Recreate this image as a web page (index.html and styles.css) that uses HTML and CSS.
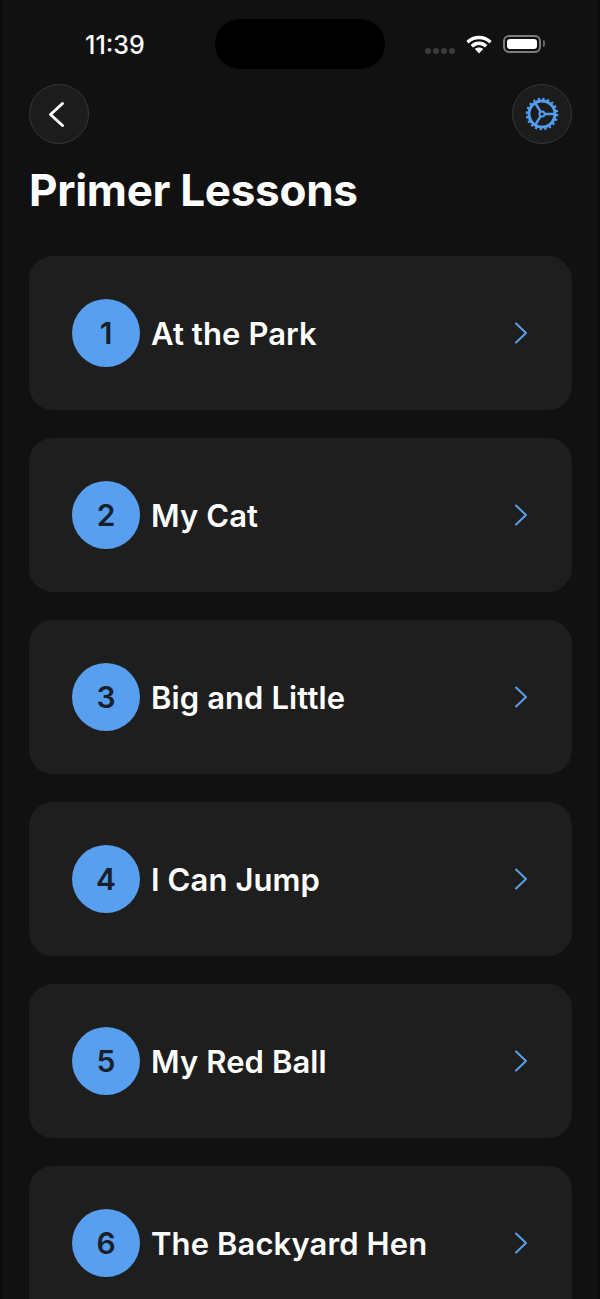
FILE: index.html
```html
<!DOCTYPE html>
<html lang="en">
<head>
<meta charset="utf-8">
<title>Primer Lessons</title>
<link rel="stylesheet" href="styles.css">
</head>
<body>
<div class="screen">
  <header class="status">
    <span class="time">11:39</span>
    <span class="island"></span>
    <div class="indicators">
      <span class="signal"><i></i><i></i><i></i><i></i></span>
      <svg class="wifi" width="28" height="20" viewBox="0 0 28 20"><path d="M2.500 8.200C9 2 19 2 25.500 8.200M6.800 12.300C11 8.300 17 8.300 21.200 12.300" fill="none" stroke="#fff" stroke-width="3.400"/><path d="M14 19.500l-4.200-4.400c2.400-2 6-2 8.400 0z" fill="#fff"/></svg>
      <span class="battery"><span class="battery-fill"></span></span>
    </div>
  </header>
  <nav class="toolbar">
    <button class="round-btn" aria-label="Back">
      <svg width="24" height="32" viewBox="0 0 24 32"><path d="M15.500 5.500L3.500 16.500L15.500 27.500" fill="none" stroke="#fff" stroke-width="3" stroke-linecap="round" stroke-linejoin="round"/></svg>
    </button>
    <button class="round-btn" aria-label="Settings">
      <svg width="36" height="36" viewBox="0 0 36 36">
        <circle cx="18" cy="18" r="13" fill="none" stroke="#549df0" stroke-width="3"/>
        <circle cx="18" cy="18" r="15" fill="none" stroke="#549df0" stroke-width="2.600" stroke-dasharray="2.200 2.512"/>
        <circle cx="18" cy="18" r="2.600" fill="none" stroke="#549df0" stroke-width="2"/>
        <path d="M20.500 18H30M16.700 15.800L11.500 7.500M16.700 20.200L11.500 28.500" fill="none" stroke="#549df0" stroke-width="2.400"/>
      </svg>
    </button>
  </nav>
  <h1 class="page-title">Primer Lessons</h1>
  <main class="lessons">
    <a class="lesson"><span class="num">1</span><span class="name">At the Park</span><svg class="chev" width="16" height="24" viewBox="0 0 16 24"><path d="M3 2.500L13 12L3 21.500" fill="none" stroke="#5a9fe8" stroke-width="2" stroke-linecap="round" stroke-linejoin="round"/></svg></a>
    <a class="lesson"><span class="num">2</span><span class="name">My Cat</span><svg class="chev" width="16" height="24" viewBox="0 0 16 24"><path d="M3 2.500L13 12L3 21.500" fill="none" stroke="#5a9fe8" stroke-width="2" stroke-linecap="round" stroke-linejoin="round"/></svg></a>
    <a class="lesson"><span class="num">3</span><span class="name">Big and Little</span><svg class="chev" width="16" height="24" viewBox="0 0 16 24"><path d="M3 2.500L13 12L3 21.500" fill="none" stroke="#5a9fe8" stroke-width="2" stroke-linecap="round" stroke-linejoin="round"/></svg></a>
    <a class="lesson"><span class="num">4</span><span class="name">I Can Jump</span><svg class="chev" width="16" height="24" viewBox="0 0 16 24"><path d="M3 2.500L13 12L3 21.500" fill="none" stroke="#5a9fe8" stroke-width="2" stroke-linecap="round" stroke-linejoin="round"/></svg></a>
    <a class="lesson"><span class="num">5</span><span class="name">My Red Ball</span><svg class="chev" width="16" height="24" viewBox="0 0 16 24"><path d="M3 2.500L13 12L3 21.500" fill="none" stroke="#5a9fe8" stroke-width="2" stroke-linecap="round" stroke-linejoin="round"/></svg></a>
    <a class="lesson"><span class="num">6</span><span class="name">The Backyard Hen</span><svg class="chev" width="16" height="24" viewBox="0 0 16 24"><path d="M3 2.500L13 12L3 21.500" fill="none" stroke="#5a9fe8" stroke-width="2" stroke-linecap="round" stroke-linejoin="round"/></svg></a>
  </main>
</div>
</body>
</html>
```
FILE: styles.css
```css
* { box-sizing: border-box; }

html, body {
  margin: 0;
  height: 100%;
  background: #0a0a0a;
  overflow: hidden;
}

.screen {
  width: 596px;
  height: 1299px;
  margin-left: 2px;
  margin-right: 2px;
  background: #111111;
  overflow: hidden;
  font-family: Inter, "Liberation Sans", sans-serif;
  color: #fff;
}

.status {
  height: 84px;
  padding: 19px 27px 0 83px;
  display: flex;
  align-items: flex-start;
}

.time {
  width: 130px;
  margin-top: 12px;
  font-size: 25px;
  line-height: 28px;
  font-weight: 500;
}

.island {
  width: 170px;
  height: 50px;
  border-radius: 25px;
  background: #000;
}

.indicators {
  margin-left: 40px;
  margin-top: 14px;
  display: flex;
  align-items: center;
  gap: 10px;
}

.signal {
  display: flex;
  gap: 2px;
  margin-top: 15px;
}

.signal i {
  width: 6px;
  height: 6px;
  border-radius: 50%;
  background: #3c3c3c;
}

.battery {
  position: relative;
  width: 38px;
  height: 18px;
  padding: 2px;
  border: 2px solid #7c7c7c;
  border-radius: 6px;
}

.battery::after {
  content: "";
  position: absolute;
  right: -6px;
  top: 3px;
  width: 2px;
  height: 7px;
  border-radius: 0 2px 2px 0;
  background: #666;
}

.battery-fill {
  display: block;
  height: 100%;
  background: #fff;
  border-radius: 3px;
}

.toolbar {
  height: 60px;
  padding: 0 26px 0 27px;
  display: flex;
  justify-content: space-between;
}

.round-btn {
  width: 60px;
  height: 60px;
  padding: 0;
  border: 1px solid #363636;
  border-radius: 50%;
  background: #1c1c1c;
  display: flex;
  align-items: center;
  justify-content: center;
}

.page-title {
  margin: 20px 0 0 27px;
  font-size: 44px;
  line-height: 52px;
  font-weight: 700;
  letter-spacing: -0.3px;
}

.lessons {
  margin: 40px 26px 0 27px;
  display: flex;
  flex-direction: column;
  gap: 28px;
}

.lesson {
  flex: none;
  height: 154px;
  padding: 0 43px 0 43px;
  display: flex;
  align-items: center;
  background: #1e1e1e;
  border-radius: 24px;
}

.num {
  flex: none;
  width: 68px;
  height: 68px;
  margin-right: 11px;
  border-radius: 50%;
  background: #589fef;
  color: #17202b;
  display: flex;
  align-items: center;
  justify-content: center;
  font-size: 30px;
  font-weight: 600;
}

.name {
  flex: 1;
  font-size: 31px;
  font-weight: 600;
  letter-spacing: 0.1px;
}

.chev { flex: none; }
```
